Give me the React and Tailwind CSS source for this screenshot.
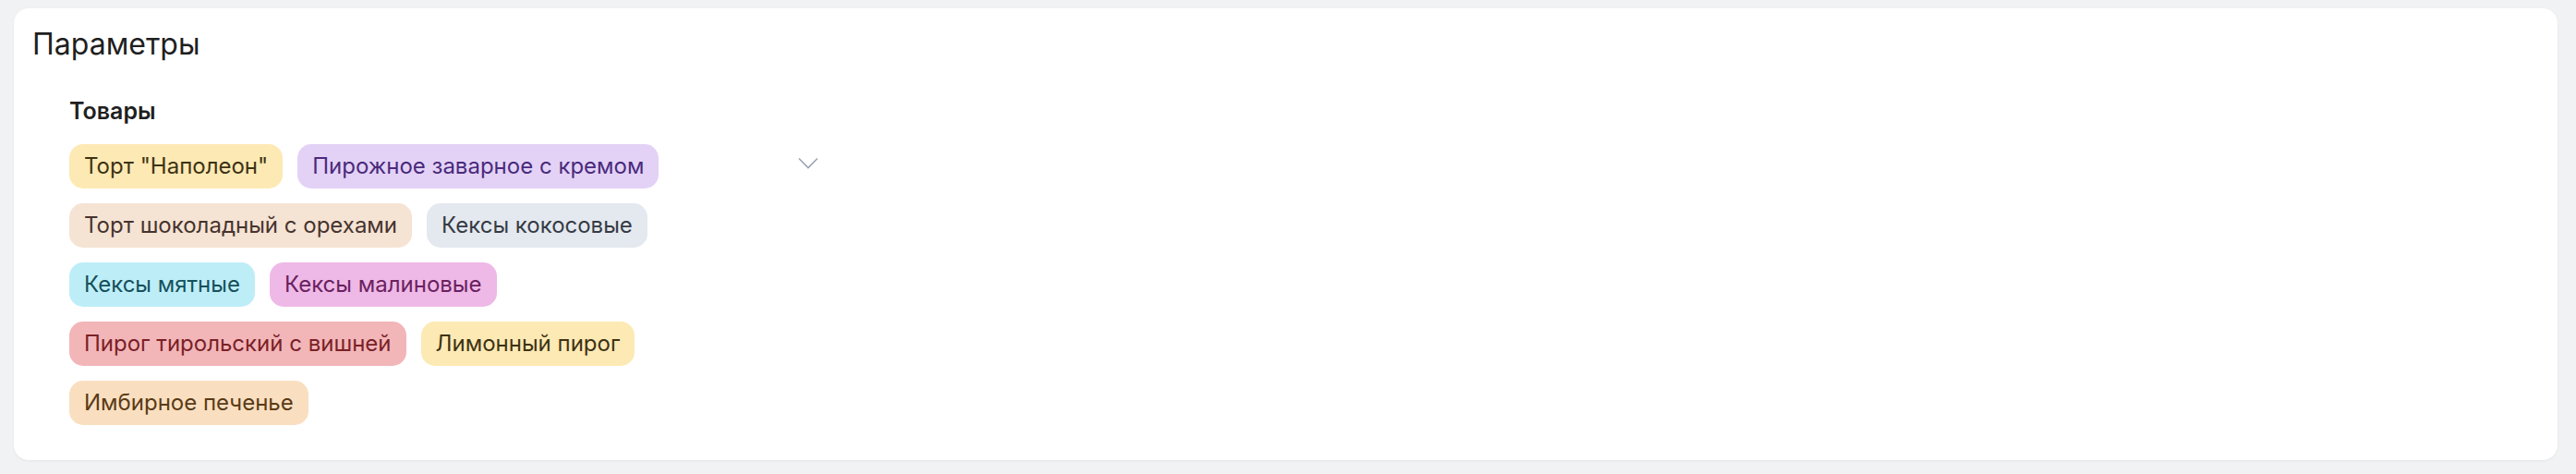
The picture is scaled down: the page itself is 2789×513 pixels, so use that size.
const items = [
  { label: 'Торт "Наполеон"', cls: 'bg-[#fde9b4] text-[#3d3213]' },
  { label: 'Пирожное заварное с кремом', cls: 'bg-[#e3d2f6] text-[#4a2a7c]' },
  { label: 'Торт шоколадный с орехами', cls: 'bg-[#f5e3d3] text-[#46332f]' },
  { label: 'Кексы кокосовые', cls: 'bg-[#e4e8ef] text-[#353b44]' },
  { label: 'Кексы мятные', cls: 'bg-[#bdeef8] text-[#17505b]' },
  { label: 'Кексы малиновые', cls: 'bg-[#eeb9e6] text-[#6a2160]' },
  { label: 'Пирог тирольский с вишней', cls: 'bg-[#f2b6b9] text-[#7a2126]' },
  { label: 'Лимонный пирог', cls: 'bg-[#fde9b4] text-[#3d3213]' },
  { label: 'Имбирное печенье', cls: 'bg-[#f9dfc0] text-[#5a3a16]' },
];

const Chip = ({ label, cls }) => (
  <span className={`h-12 px-4 rounded-[15px] flex items-center text-[24px] leading-none whitespace-nowrap ${cls}`}>
    {label}
  </span>
);

export default function App() {
  return (
    <div
      className="min-h-[513px] bg-[#f1f2f4] pl-[15px] pr-[20px] pt-[9px] pb-[14px]"
      style={{ fontFamily: 'Inter, "Noto Sans", sans-serif' }}
    >
      <div className="bg-white rounded-[16px] shadow-[0_1px_3px_rgba(0,0,0,0.06)] px-5 pt-[20px] pb-[38px]">
        <h2 className="text-[32px] leading-[38px] text-[#1f1f1f] font-normal">Параметры</h2>
        <div className="ml-10 mt-[37px]">
          <div className="text-[25px] leading-[32px] font-semibold text-[#1f1f1f]">Товары</div>
          <div className="mt-5 flex items-start">
            <div className="w-[780px] flex flex-wrap gap-4">
              {items.map((it) => (
                <Chip key={it.label} {...it} />
              ))}
            </div>
            <svg className="ml-[9px] mt-[14px] w-[22px] h-[13px] text-[#9ca3af]" viewBox="0 0 22 13" fill="none" stroke="currentColor" strokeWidth={1.6}>
              <path d="M1 1.5l10 10 10-10" />
            </svg>
          </div>
        </div>
      </div>
    </div>
  );
}
